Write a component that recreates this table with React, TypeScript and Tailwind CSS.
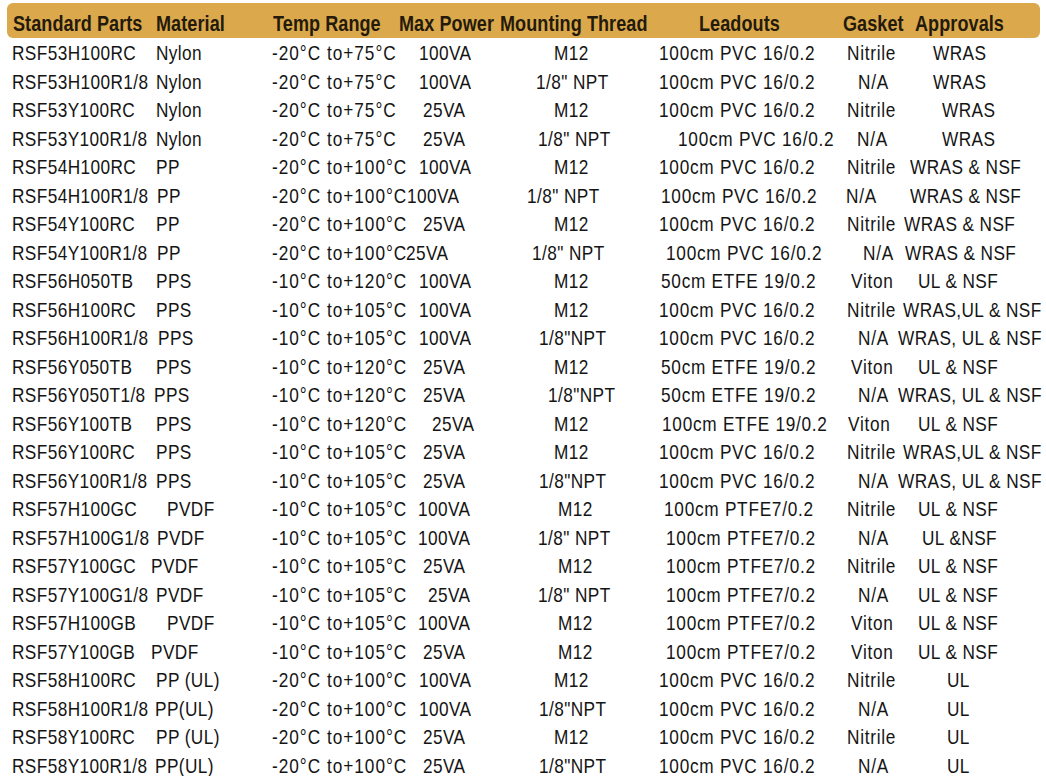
import React from "react";

type R = {
  part: string;
  mat: [number, string];
  temp: string;
  pow: [number, string];
  thr: [number, string];
  lead: [number, string];
  gas: [number, string];
  app: [number, string];
};

const PVC = "100cm PVC 16/0.2";
const PTFE = "100cm PTFE7/0.2";
const ETFE50 = "50cm ETFE 19/0.2";
const T75 = "-20°C to+75°C";
const T100 = "-20°C to+100°C";
const T120 = "-10°C to+120°C";
const T105 = "-10°C to+105°C";
const NPT = '1/8" NPT';
const NPT2 = '1/8"NPT';

const rows: R[] = [
  { part: "RSF53H100RC", mat: [155.7, "Nylon"], temp: T75, pow: [418.7, "100VA"], thr: [554, "M12"], lead: [659.3, PVC], gas: [846.7, "Nitrile"], app: [933.3, "WRAS"] },
  { part: "RSF53H100R1/8", mat: [155.7, "Nylon"], temp: T75, pow: [418.7, "100VA"], thr: [536, NPT], lead: [659.3, PVC], gas: [858.3, "N/A"], app: [933.3, "WRAS"] },
  { part: "RSF53Y100RC", mat: [155.7, "Nylon"], temp: T75, pow: [423.3, "25VA"], thr: [554, "M12"], lead: [659.3, PVC], gas: [846.7, "Nitrile"], app: [941.7, "WRAS"] },
  { part: "RSF53Y100R1/8", mat: [155.7, "Nylon"], temp: T75, pow: [423.3, "25VA"], thr: [538.3, NPT], lead: [678.3, PVC], gas: [857.3, "N/A"], app: [941.7, "WRAS"] },
  { part: "RSF54H100RC", mat: [155.7, "PP"], temp: T100, pow: [418.7, "100VA"], thr: [554, "M12"], lead: [659.3, PVC], gas: [846.7, "Nitrile"], app: [910, "WRAS & NSF"] },
  { part: "RSF54H100R1/8", mat: [157, "PP"], temp: T100, pow: [407, "100VA"], thr: [526.7, NPT], lead: [660.7, PVC], gas: [846, "N/A"], app: [910, "WRAS & NSF"] },
  { part: "RSF54Y100RC", mat: [155.7, "PP"], temp: T100, pow: [423, "25VA"], thr: [554, "M12"], lead: [659.3, PVC], gas: [846.7, "Nitrile"], app: [904.3, "WRAS & NSF"] },
  { part: "RSF54Y100R1/8", mat: [157, "PP"], temp: T100, pow: [405.7, "25VA"], thr: [531.7, NPT], lead: [666, PVC], gas: [862.7, "N/A"], app: [905, "WRAS & NSF"] },
  { part: "RSF56H050TB", mat: [155.7, "PPS"], temp: T120, pow: [418.7, "100VA"], thr: [554, "M12"], lead: [660.7, ETFE50], gas: [851, "Viton"], app: [918.3, "UL & NSF"] },
  { part: "RSF56H100RC", mat: [155.7, "PPS"], temp: T105, pow: [418.7, "100VA"], thr: [554, "M12"], lead: [659.3, PVC], gas: [846.7, "Nitrile"], app: [903.3, "WRAS,UL & NSF"] },
  { part: "RSF56H100R1/8", mat: [158, "PPS"], temp: T105, pow: [418.7, "100VA"], thr: [539.3, NPT2], lead: [659.3, PVC], gas: [858.3, "N/A"], app: [898.3, "WRAS, UL & NSF"] },
  { part: "RSF56Y050TB", mat: [155.7, "PPS"], temp: T120, pow: [423, "25VA"], thr: [554, "M12"], lead: [660.7, ETFE50], gas: [851, "Viton"], app: [918.3, "UL & NSF"] },
  { part: "RSF56Y050T1/8", mat: [154, "PPS"], temp: T120, pow: [422.7, "25VA"], thr: [548.3, NPT2], lead: [660.7, ETFE50], gas: [858.3, "N/A"], app: [898.3, "WRAS, UL & NSF"] },
  { part: "RSF56Y100TB", mat: [155.7, "PPS"], temp: T120, pow: [431.7, "25VA"], thr: [554, "M12"], lead: [661.7, "100cm ETFE 19/0.2"], gas: [848.3, "Viton"], app: [918.3, "UL & NSF"] },
  { part: "RSF56Y100RC", mat: [155.7, "PPS"], temp: T105, pow: [423, "25VA"], thr: [554, "M12"], lead: [659.3, PVC], gas: [846.7, "Nitrile"], app: [903.3, "WRAS,UL & NSF"] },
  { part: "RSF56Y100R1/8", mat: [155.7, "PPS"], temp: T105, pow: [423, "25VA"], thr: [539.3, NPT2], lead: [659.3, PVC], gas: [858.3, "N/A"], app: [898.3, "WRAS, UL & NSF"] },
  { part: "RSF57H100GC", mat: [166.7, "PVDF"], temp: T105, pow: [418, "100VA"], thr: [558.3, "M12"], lead: [664, PTFE], gas: [846.7, "Nitrile"], app: [918.3, "UL & NSF"] },
  { part: "RSF57H100G1/8", mat: [157, "PVDF"], temp: T105, pow: [418, "100VA"], thr: [537.7, NPT], lead: [666, PTFE], gas: [858.3, "N/A"], app: [921.7, "UL &NSF"] },
  { part: "RSF57Y100GC", mat: [150.7, "PVDF"], temp: T105, pow: [422.7, "25VA"], thr: [558.3, "M12"], lead: [666, PTFE], gas: [846.7, "Nitrile"], app: [918.3, "UL & NSF"] },
  { part: "RSF57Y100G1/8", mat: [156, "PVDF"], temp: T105, pow: [428.3, "25VA"], thr: [537.7, NPT], lead: [666, PTFE], gas: [858.3, "N/A"], app: [918.3, "UL & NSF"] },
  { part: "RSF57H100GB", mat: [166.7, "PVDF"], temp: T105, pow: [418, "100VA"], thr: [558.3, "M12"], lead: [666, PTFE], gas: [851, "Viton"], app: [918.3, "UL & NSF"] },
  { part: "RSF57Y100GB", mat: [150.7, "PVDF"], temp: T105, pow: [422.7, "25VA"], thr: [558.3, "M12"], lead: [666, PTFE], gas: [851, "Viton"], app: [918.3, "UL & NSF"] },
  { part: "RSF58H100RC", mat: [155.7, "PP (UL)"], temp: T100, pow: [418.7, "100VA"], thr: [554, "M12"], lead: [659.3, PVC], gas: [846.7, "Nitrile"], app: [947.3, "UL"] },
  { part: "RSF58H100R1/8", mat: [155, "PP(UL)"], temp: T100, pow: [418.7, "100VA"], thr: [539.3, NPT2], lead: [659.3, PVC], gas: [858.3, "N/A"], app: [947.3, "UL"] },
  { part: "RSF58Y100RC", mat: [155.7, "PP (UL)"], temp: T100, pow: [423, "25VA"], thr: [554, "M12"], lead: [659.3, PVC], gas: [846.7, "Nitrile"], app: [947.3, "UL"] },
  { part: "RSF58Y100R1/8", mat: [155, "PP(UL)"], temp: T100, pow: [423, "25VA"], thr: [539.3, NPT2], lead: [659.3, PVC], gas: [858.3, "N/A"], app: [947.3, "UL"] },
];

// column start x (page coordinates) of the body grid
const COL = [12, 150, 272, 405, 526, 659, 846, 898];

type Track = "n" | "m" | "w";

function Narrow({ children, track }: { children: React.ReactNode; track: Track }) {
  const cls =
    track === "w"
      ? "inline-block whitespace-nowrap origin-left scale-x-[0.82] tracking-[1.2px]"
      : track === "m"
        ? "inline-block whitespace-nowrap origin-left scale-x-[0.82] tracking-[0.9px]"
        : "inline-block whitespace-nowrap origin-left scale-x-[0.82] tracking-[0.5px]";
  return <span className={cls}>{children}</span>;
}

function Cell({ x, col, text, track = "n" }: { x: number; col: number; text: string; track?: Track }) {
  return (
    <span className="whitespace-nowrap" style={{ paddingLeft: Math.max(0, x - COL[col]) }}>
      <Narrow track={track}>{text}</Narrow>
    </span>
  );
}

const headers = ["Standard Parts", "Material", "Temp Range", "Max Power", "Mounting Thread", "Leadouts", "Gasket", "Approvals"];

export default function App() {
  return (
    <div className="w-[1046px] h-[776px] overflow-hidden bg-white font-['Liberation_Sans','Arial',sans-serif]">
      <div className="mt-[3px] ml-[7px] w-[1033px] h-[35px] rounded-[6px] bg-[#dba94b]">
        <div className="grid grid-cols-[143px_117px_126px_101px_199px_144px_72px_1fr] pl-[6px] pt-[8px] text-[22px] leading-[25px] font-bold text-[#241a0c]">
          {headers.map((h) => (
            <span key={h} className="whitespace-nowrap">
              <span className="inline-block whitespace-nowrap origin-left scale-x-[0.82] tracking-[0.1px]">{h}</span>
            </span>
          ))}
        </div>
      </div>
      <div className="mt-[1px] text-[21px] text-[#141414]">
        {rows.map((r, i) => (
          <div
            key={i}
            className="grid grid-cols-[138px_122px_133px_121px_133px_187px_52px_148px] pl-[12px] h-[28.52px] leading-[28.52px]"
          >
            <Cell x={12} col={0} text={r.part} />
            <Cell x={r.mat[0]} col={1} text={r.mat[1]} />
            <Cell x={272} col={2} text={r.temp} track="w" />
            <Cell x={r.pow[0]} col={3} text={r.pow[1]} />
            <Cell x={r.thr[0]} col={4} text={r.thr[1]} />
            <Cell x={r.lead[0]} col={5} text={r.lead[1]} track="m" />
            <Cell x={r.gas[0]} col={6} text={r.gas[1]} track="m" />
            <Cell x={r.app[0]} col={7} text={r.app[1]} />
          </div>
        ))}
      </div>
    </div>
  );
}
